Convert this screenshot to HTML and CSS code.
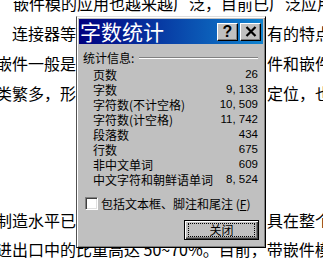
FILE: index.html
```html
<!DOCTYPE html>
<html lang="zh-CN">
<head>
<meta charset="utf-8">
<title>字数统计</title>
<link rel="stylesheet" href="styles.css">
</head>
<body>
<div class="doc">
  <p class="line l1">嵌件模的应用也越来越广泛，目前已广泛应用</p>
  <p class="line split"><span class="left">连接器等</span><span class="right">有的特点</span></p>
  <p class="line split"><span class="left">嵌件一般是</span><span class="right">件和嵌件</span></p>
  <p class="line split"><span class="left">类繁多，形</span><span class="right">定位，也</span></p>
  <p class="line split l5"><span class="left">制造水平已</span><span class="right">具在整个</span></p>
  <p class="line l6">进出口中的比重高达 50~70%。目前，带嵌件模</p>
</div>

<div class="dialog">
  <div class="titlebar">
    <span class="title">字数统计</span>
    <div class="tbtns">
      <span class="tbtn q">?</span>
      <span class="tbtn"><svg width="12" height="11" viewBox="0 0 12 11"><path d="M1.5 1 L10.5 10 M10.5 1 L1.5 10" stroke="#000" stroke-width="2.2" fill="none"/></svg></span>
    </div>
  </div>
  <div class="body">
    <div class="group-head"><span>统计信息:</span><span class="etch"></span></div>
    <div class="stats">
      <div class="row"><span class="k">页数</span><span class="v">26</span></div>
      <div class="row"><span class="k">字数</span><span class="v">9, 133</span></div>
      <div class="row"><span class="k">字符数(不计空格)</span><span class="v">10, 509</span></div>
      <div class="row"><span class="k">字符数(计空格)</span><span class="v">11, 742</span></div>
      <div class="row"><span class="k">段落数</span><span class="v">434</span></div>
      <div class="row"><span class="k">行数</span><span class="v">675</span></div>
      <div class="row"><span class="k">非中文单词</span><span class="v">609</span></div>
      <div class="row"><span class="k">中文字符和朝鲜语单词</span><span class="v">8, 524</span></div>
    </div>
    <div class="check"><span class="box"></span><span>包括文本框、脚注和尾注 (<u>F</u>)</span></div>
    <div class="actions"><span class="btn"><span class="focus">关闭</span></span></div>
  </div>
</div>
</body>
</html>
```

FILE: styles.css
```css
html, body {
  margin: 0;
  padding: 0;
}
body {
  width: 323px;
  height: 262px;
  overflow: hidden;
  background: #fff;
  position: relative;
  font-family: "Noto Sans CJK SC", "Noto Sans", sans-serif;
  color: #000;
}
.doc {
  margin-top: -12px;
}
.line {
  margin: 0;
  height: 30px;
  line-height: 30px;
  font-size: 16px;
  white-space: nowrap;
}
.l1 {
  padding-left: 13px;
}
.split {
  display: grid;
  grid-template-columns: 80px auto;
  column-gap: 191px;
  margin-left: -4px;
}
.split .left {
  text-align: right;
}
.l5 {
  margin-top: 98px;
  height: 28px;
  line-height: 28px;
}
.l6 {
  margin-left: -4px;
}

.dialog {
  position: absolute;
  left: 76px;
  top: 16px;
  width: 190px;
  height: 232px;
  box-sizing: border-box;
  background: #c0c0c0;
  border: 1px solid;
  border-color: #dfdfdf #000 #000 #505050;
  box-shadow: inset 1px 1px #fff, inset -1px -1px #808080;
  padding: 2px;
  display: flex;
  flex-direction: column;
}
.titlebar {
  height: 25px;
  background: linear-gradient(90deg, #000080, #1084d0);
  display: flex;
  align-items: center;
  justify-content: space-between;
  padding: 0 2px 0 1px;
}
.title {
  color: #fff;
  font-size: 21px;
  line-height: 25px;
}
.tbtns {
  display: flex;
  gap: 2px;
}
.tbtn {
  width: 21px;
  height: 18px;
  box-sizing: border-box;
  background: #c0c0c0;
  border: 1px solid;
  border-color: #fff #000 #000 #fff;
  box-shadow: inset -1px -1px #808080;
  display: flex;
  align-items: center;
  justify-content: center;
}
.tbtn.q {
  font-family: "Liberation Sans", sans-serif;
  font-weight: bold;
  font-size: 16px;
  line-height: 16px;
}
.body {
  padding: 0 5px 0 4px;
  font-size: 12px;
  line-height: 15px;
}
.group-head {
  margin-top: 6px;
  display: flex;
  align-items: center;
}
.etch {
  flex: 1;
  margin-left: 5px;
  margin-top: 1px;
  border-top: 1px solid #808080;
  border-bottom: 1px solid #fff;
}
.stats {
  margin-top: 2px;
}
.row {
  display: flex;
  justify-content: space-between;
  align-items: center;
  height: 15px;
  padding-left: 10px;
}
.v {
  font-family: "Liberation Sans", sans-serif;
  font-size: 11.5px;
  line-height: 13px;
}
.check {
  margin-top: 9px;
  margin-left: 2px;
  display: flex;
  align-items: center;
  gap: 3px;
}
.box {
  width: 13px;
  height: 13px;
  box-sizing: border-box;
  background: #fff;
  border: 1px solid;
  border-color: #808080 #fff #fff #808080;
  box-shadow: inset 1px 1px #404040, inset -1px -1px #dfdfdf;
}
.actions {
  margin-top: 9px;
  margin-right: -1px;
  display: flex;
  justify-content: flex-end;
}
.btn {
  width: 75px;
  height: 20px;
  box-sizing: border-box;
  border: 1px solid #000;
  box-shadow: inset 1px 1px #fff, inset -1px -1px #404040, inset -2px -2px #808080;
  padding: 2px 3px;
  display: flex;
}
.focus {
  flex: 1;
  border: 1px dotted #000;
  display: flex;
  align-items: center;
  justify-content: center;
  line-height: 12px;
}
```
